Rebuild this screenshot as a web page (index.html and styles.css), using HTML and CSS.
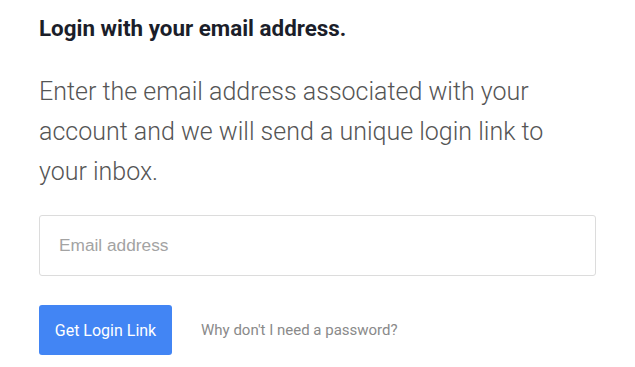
FILE: index.html
```html
<!DOCTYPE html>
<html lang="en">
<head>
<meta charset="utf-8">
<title>Login</title>
<link rel="stylesheet" href="styles.css">
</head>
<body>
<main class="login">
  <h1 class="login-title">Login with your email address.</h1>
  <p class="login-intro">Enter the email address associated with your account and we will send a unique login link to your inbox.</p>
  <input class="login-input" type="email" placeholder="Email address">
  <div class="login-actions">
    <button class="login-button" type="button">Get Login Link</button>
    <a class="login-help" href="#">Why don't I need a password?</a>
  </div>
</main>
</body>
</html>
```

FILE: styles.css
```css
html, body {
  margin: 0;
  padding: 0;
  background: #ffffff;
}

body {
  font-family: Roboto, "Liberation Sans", Arial, sans-serif;
}

.login {
  padding: 16px 39px 0 39px;
  width: 557px;
}

.login-title {
  margin: 0;
  font-size: 22.4px;
  line-height: 25px;
  font-weight: 700;
  color: #1b1e2a;
}

.login-intro {
  margin: 31px 0 0 0;
  font-size: 25px;
  line-height: 40px;
  font-weight: 300;
  color: #555555;
}

.login-input {
  display: block;
  box-sizing: border-box;
  margin-top: 23px;
  width: 557px;
  height: 61px;
  padding: 0 19px;
  border: 1px solid #dcdcdc;
  border-radius: 3px;
  font-family: "Liberation Sans", Arial, sans-serif;
  font-size: 17.3px;
  color: #333;
  outline: none;
}

.login-input::placeholder {
  color: #a3a3a3;
}

.login-actions {
  display: flex;
  align-items: center;
  gap: 29px;
  margin-top: 29px;
}

.login-button {
  box-sizing: border-box;
  height: 50px;
  width: 133px;
  padding: 0;
  border: none;
  border-radius: 3px;
  background: #4285f4;
  color: #ffffff;
  font-family: Roboto, "Liberation Sans", Arial, sans-serif;
  font-size: 16px;
  font-weight: 400;
  cursor: pointer;
}

.login-help {
  font-size: 15px;
  color: #8a8a8a;
  text-decoration: none;
}
```
